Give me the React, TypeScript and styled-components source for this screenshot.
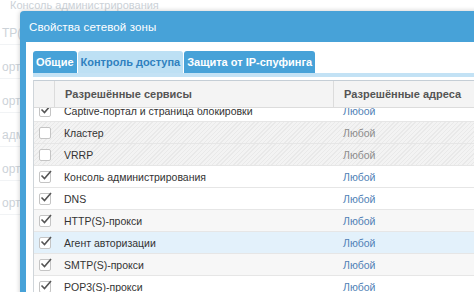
import React from "react";
import styled, { createGlobalStyle } from "styled-components";

const Global = createGlobalStyle`
  html, body { margin: 0; padding: 0; }
  body {
    width: 474px;
    height: 292px;
    overflow: hidden;
    background: #ffffff;
    font-family: "Liberation Sans", Arial, sans-serif;
  }
`;

const Screen = styled.div`
  position: relative;
  width: 474px;
  height: 292px;
  overflow: hidden;
  background: #fff;
`;

const BgPage = styled.div`
  display: flex;
  flex-direction: column;
  color: #ccd2d8;
  font-size: 12px;
`;

const BgHeading = styled.div`
  height: 11px;
  line-height: 10px;
  padding-left: 10px;
  font-size: 11px;
  white-space: nowrap;
  overflow: hidden;
`;

const BgRow = styled.div`
  height: 33px;
  line-height: 44px;
  padding-left: 2px;
  border-bottom: 1px solid #f1f3f5;
  white-space: nowrap;
`;

const Dialog = styled.div`
  position: absolute;
  left: 20px;
  top: 11px;
  width: 480px;
  height: 300px;
  display: flex;
  flex-direction: column;
  border-radius: 4px 4px 0 0;
  background: #47a2d8;
  box-shadow: 0 0 5px rgba(0, 0, 0, 0.22);
`;

const TitleBar = styled.div`
  height: 31px;
  flex: none;
  display: flex;
  align-items: center;
  padding-left: 9px;
  color: #ffffff;
  font-size: 11.5px;
  letter-spacing: 0.1px;
`;

const Body = styled.div`
  flex: 1;
  margin-left: 6px;
  background: #ffffff;
  padding: 9px 0 0 7px;
  display: flex;
  flex-direction: column;
`;

const TabStrip = styled.div`
  display: flex;
  gap: 1px;
  height: 22px;
`;

const Tab = styled.div<{ $active?: boolean }>`
  display: flex;
  align-items: center;
  padding: 0 3px;
  border-radius: 3px 3px 0 0;
  font-size: 11px;
  font-weight: bold;
  white-space: nowrap;
  background: ${(p) => (p.$active ? "#bde0f4" : "#47a2d8")};
  color: ${(p) => (p.$active ? "#2f80bf" : "#ffffff")};
`;

const TabBand = styled.div`
  height: 4px;
  background: #c3e2f5;
  margin-bottom: 3px;
`;

const Table = styled.div`
  flex: 1;
  display: flex;
  flex-direction: column;
  border-left: 1px solid #cfd5da;
  border-top: 1px solid #c5ced6;
`;

const HeaderRow = styled.div`
  display: grid;
  grid-template-columns: 20px 279px 1fr;
  height: 26px;
  background: #f4f4f4;
  border-bottom: 1px solid #dcdcdc;
  flex: none;
`;

const HeadCell = styled.div<{ $divider?: boolean }>`
  display: flex;
  align-items: center;
  padding-left: 10px;
  font-size: 11px;
  font-weight: bold;
  color: #555555;
  white-space: nowrap;
  border-left: ${(p) => (p.$divider ? "1px solid #dcdcdc" : "none")};
`;

const RowsViewport = styled.div`
  flex: 1;
  overflow: hidden;
`;

const Rows = styled.div`
  display: flex;
  flex-direction: column;
  margin-top: -8px;
`;

type Tone = "plain" | "alt" | "disabled" | "hover";

const rowBg: Record<Tone, string> = {
  plain: "#ffffff",
  alt: "#f7f7f7",
  hover: "#e3f1fb",
  disabled:
    "repeating-linear-gradient(-45deg, #f3f3f3 0px, #f3f3f3 2px, #e9e9e9 2px, #e9e9e9 3px)",
};

const Row = styled.div<{ $tone: Tone }>`
  display: grid;
  grid-template-columns: 20px 279px 1fr;
  height: 21px;
  border-bottom: 1px solid #e6e6e6;
  background: ${(p) => rowBg[p.$tone]};
  align-items: center;
`;

const CheckCell = styled.div`
  display: flex;
  align-items: center;
  justify-content: flex-start;
  padding-left: 5px;
`;

const Box = styled.div`
  width: 10px;
  height: 10px;
  border: 1px solid #c4c4c4;
  border-radius: 2px;
  background: #fff;
  position: relative;
`;

const Mark = styled.svg`
  position: absolute;
  left: 0px;
  top: -3px;
  width: 12px;
  height: 12px;
`;

const NameCell = styled.div`
  padding-left: 10px;
  font-size: 10.5px;
  color: #333333;
  white-space: nowrap;
`;

const AddrCell = styled.div<{ $muted?: boolean }>`
  padding-left: 10px;
  font-size: 10.5px;
  color: ${(p) => (p.$muted ? "#8c8c8c" : "#4f7fb6")};
  white-space: nowrap;
`;

const Checkbox = ({ checked }: { checked: boolean }) => (
  <Box>
    {checked && (
      <Mark viewBox="0 0 12 12">
        <path d="M1.5 6.5 L4.5 9.5 L11 2" fill="none" stroke="#555" strokeWidth="1.6" />
      </Mark>
    )}
  </Box>
);

const services: { name: string; checked: boolean; tone: Tone }[] = [
  { name: "Captive-портал и страница блокировки", checked: true, tone: "plain" },
  { name: "Кластер", checked: false, tone: "disabled" },
  { name: "VRRP", checked: false, tone: "disabled" },
  { name: "Консоль администрирования", checked: true, tone: "plain" },
  { name: "DNS", checked: true, tone: "plain" },
  { name: "HTTP(S)-прокси", checked: true, tone: "alt" },
  { name: "Агент авторизации", checked: true, tone: "hover" },
  { name: "SMTP(S)-прокси", checked: true, tone: "alt" },
  { name: "POP3(S)-прокси", checked: true, tone: "plain" },
];

export default function App() {
  return (
    <Screen>
      <Global />
      <BgPage>
        <BgHeading>Консоль администрирования</BgHeading>
        <BgRow>TP(</BgRow>
        <BgRow>орт</BgRow>
        <BgRow>орт</BgRow>
        <BgRow>адм</BgRow>
        <BgRow>орт</BgRow>
        <BgRow>орт</BgRow>
      </BgPage>
      <Dialog>
        <TitleBar>Свойства сетевой зоны</TitleBar>
        <Body>
          <TabStrip>
            <Tab>Общие</Tab>
            <Tab $active>Контроль доступа</Tab>
            <Tab>Защита от IP-спуфинга</Tab>
          </TabStrip>
          <TabBand />
          <Table>
            <HeaderRow>
              <HeadCell />
              <HeadCell $divider>Разрешённые сервисы</HeadCell>
              <HeadCell $divider>Разрешённые адреса</HeadCell>
            </HeaderRow>
            <RowsViewport>
              <Rows>
                {services.map((s) => (
                  <Row key={s.name} $tone={s.tone}>
                    <CheckCell>
                      <Checkbox checked={s.checked} />
                    </CheckCell>
                    <NameCell>{s.name}</NameCell>
                    <AddrCell $muted={s.tone === "disabled"}>Любой</AddrCell>
                  </Row>
                ))}
              </Rows>
            </RowsViewport>
          </Table>
        </Body>
      </Dialog>
    </Screen>
  );
}
